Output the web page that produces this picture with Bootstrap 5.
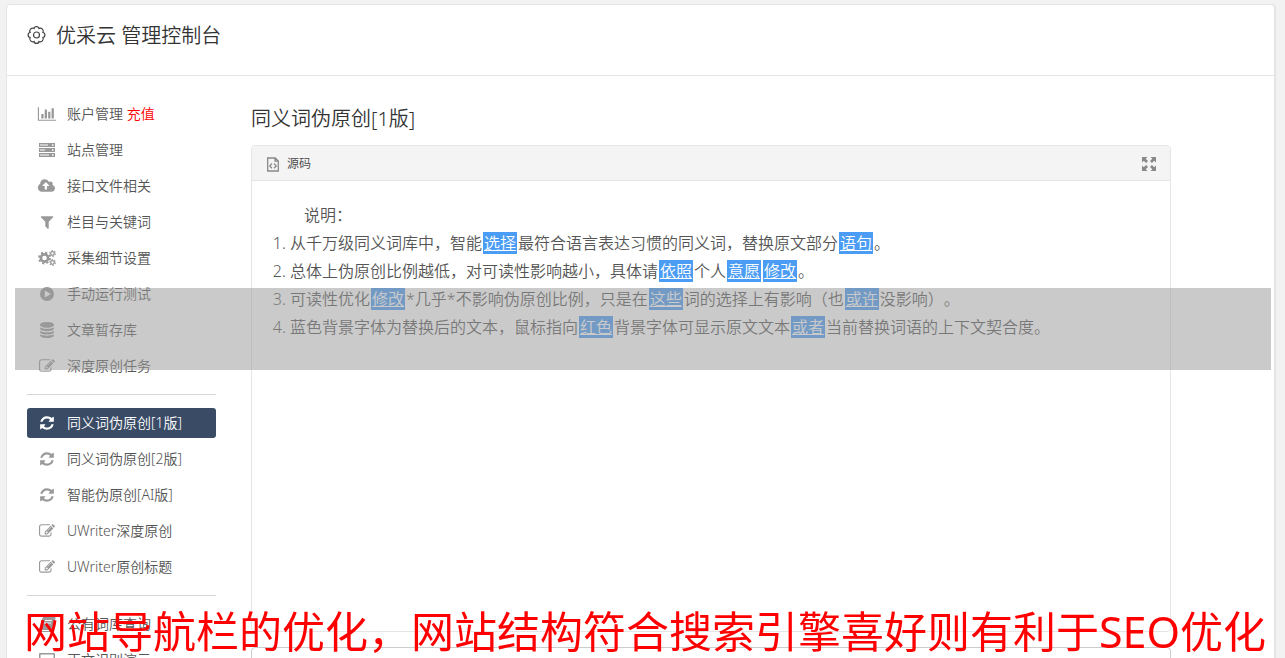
<!DOCTYPE html>
<html lang="zh-CN">
<head>
<meta charset="utf-8">
<meta name="viewport" content="width=device-width, initial-scale=1">
<title>优采云 管理控制台</title>
<link rel="stylesheet" href="https://cdn.jsdelivr.net/npm/bootstrap@5.3.0/dist/css/bootstrap.min.css">
<style>
body{background:#f2f2f2;font-family:"Noto Sans","Noto Sans CJK SC",sans-serif;font-size:14px;font-weight:350;color:#333;height:100vh;overflow:hidden;text-spacing-trim:space-all}
.console{margin:4px 10px 0 6px;background:#fff;border:1px solid #e5e5e5;border-radius:4px;box-shadow:1px 0 0 #e5e5e5;min-height:100vh}
.console-head{height:71px;padding:0 20px;border-bottom:1px solid #e5e5e5}
.console-head h1,.work h2{font-size:20px;line-height:28px;font-weight:350;margin:0}
.console-head h1{padding-top:17px}
.side{width:209px;padding:23px 0 0 20px;flex:none}
.side .nav{gap:6px}
.side .nav-link{height:30px;padding:0 10px;gap:10px;color:#555;border-radius:3px;line-height:30px;white-space:nowrap}
.side .nav-link svg{width:20px;height:16px;flex:none;fill:#999;stroke:none}
.side .nav-link.active{background:#3a4b66;color:#fff}
.side .nav-link.active svg{fill:#fff}
.side hr{margin:13px 0;border-top:1px solid #d6d6d6;opacity:1}
.recharge{color:#f00}
.work{padding:29px 103px 0 35px;min-width:0}
.editor{margin-top:12px;border:1px solid #e5e5e5;border-radius:4px}
.editor-bar{height:35px;padding:2px 13px 0 15px;background:#f4f4f4;border-bottom:1px solid #e5e5e5;border-radius:4px 4px 0 0}
.editor-bar button{border:0;background:none;padding:0;font-size:12px;color:#444;font-weight:350;line-height:20px}
.editor-text{height:450px;padding:20px;font-size:16px;line-height:28px;color:#555}
.editor-text p{margin:0;padding-left:32px}
.editor-text ol{margin:0;padding-left:18px}
.editor-text a{background:#4a9cf4;color:#fff;padding:0 1px;margin:0 1px}
.result-box{display:block;margin-top:15px;height:80px;border:1px solid #ccc;border-radius:4px;width:100%}
.veil{position:fixed;left:15px;right:14px;top:288px;height:82px;background:rgba(154,154,154,.52);pointer-events:none}
.caption{position:fixed;left:24px;bottom:-4px;margin:0;font-size:43px;line-height:60px;font-weight:400;color:#f00;white-space:nowrap;pointer-events:none}
</style>
</head>
<body>
<svg width="0" height="0" class="position-absolute" aria-hidden="true">
  <symbol id="i-refresh" viewBox="0 0 1792 1792"><path d="M1639 1056q0 5-1 7-64 268-268 434.500t-478 166.500q-146 0-282.500-55t-243.500-157l-129 129q-19 19-45 19t-45-19-19-45v-448q0-26 19-45t45-19h448q26 0 45 19t19 45-19 45l-137 137q71 66 161 102t187 36q134 0 250-65t186-179q11-17 53-117 8-23 30-23h192q13 0 22.500 9.500t9.500 22.500zm25-800v448q0 26-19 45t-45 19h-448q-26 0-45-19t-19-45 19-45l138-138q-148-137-349-137-134 0-250 65t-186 179q-11 17-53 117-8 23-30 23h-199q-13 0-22.500-9.500t-9.500-22.500v-7q65-268 270-434.500t480-166.500q146 0 284 55.500t245 156.500l130-129q19-19 45-19t45 19 19 45z"/></symbol>
  <symbol id="i-edit" viewBox="0 0 1792 1792"><path d="M888 1184l116-116-152-152-116 116v56h96v96h56zm440-720q-16-16-33 1l-350 350q-17 17-1 33t33-1l350-350q17-17 1-33zm80 594v190q0 119-84.500 203.500t-203.500 84.500h-832q-119 0-203.500-84.500t-84.500-203.500v-832q0-119 84.500-203.500t203.500-84.500h832q63 0 117 25 15 7 18 23 3 17-9 29l-49 49q-14 14-32 8-23-6-45-6h-832q-66 0-113 47t-47 113v832q0 66 47 113t113 47h832q66 0 113-47t47-113v-126q0-13 9-22l64-64q15-15 35-7t20 29zm-96-738l288 288-672 672h-288v-288zm444 132l-92 92-288-288 92-92q28-28 68-28t68 28l152 152q28 28 28 68t-28 68z"/></symbol>
  <symbol id="i-filter" viewBox="0 0 1792 1792"><path d="M1595 295q17 41-14 70l-493 493v742q0 42-39 59-13 5-25 5-27 0-45-19l-256-256q-19-19-19-45v-486l-493-493q-31-29-14-70 17-39 59-39h1280q42 0 59 39z"/></symbol>
  <symbol id="i-chart" viewBox="0 0 2048 1792"><path d="M640 896v512h-256v-512h256zm384-512v1024h-256v-1024h256zm1024 1152v128h-2048v-1536h128v1408h1920zm-640-896v768h-256v-768h256zm384-384v1152h-256v-1152h256z"/></symbol>
  <symbol id="i-cloud" viewBox="0 0 1920 1792"><path d="M1216 864q0-14-9-23l-352-352q-9-9-23-9t-23 9l-351 351q-10 12-10 24 0 14 9 23t23 9h224v352q0 13 9.500 22.500t22.500 9.500h192q13 0 22.500-9.500t9.500-22.500v-352h224q13 0 22.500-9.500t9.500-22.500zm640 288q0 159-112.500 271.500t-271.500 112.500h-1088q-185 0-316.500-131.500t-131.500-316.500q0-130 70-240t188-165q-2-30-2-43 0-212 150-362t362-150q156 0 285.500 87t188.500 231q71-62 166-62 106 0 181 75t75 181q0 76-41 138 130 31 213.500 135.500t83.500 238.500z"/></symbol>
  <symbol id="i-db" viewBox="0 0 1792 1792"><path d="M896 768q237 0 443-43t325-127v170q0 69-103 128t-280 93.500-385 34.500-385-34.500-280-93.500-103-128v-170q119 84 325 127t443 43zm0 768q237 0 443-43t325-127v170q0 69-103 128t-280 93.500-385 34.500-385-34.500-280-93.500-103-128v-170q119 84 325 127t443 43zm0-384q237 0 443-43t325-127v170q0 69-103 128t-280 93.500-385 34.500-385-34.500-280-93.500-103-128v-170q119 84 325 127t443 43zm0-1152q208 0 385 34.500t280 93.500 103 128v128q0 69-103 128t-280 93.500-385 34.500-385-34.500-280-93.500-103-128v-128q0-69 103-128t280-93.500 385-34.500z"/></symbol>
  <symbol id="i-server" viewBox="0 0 18 16"><path fill-rule="evenodd" d="M1 1h16v4H1zM1 6h16v4H1zM1 11h16v4H1zM2 2.500v1h8v-1zM2 7.500v1h5v-1zM2 12.500v1h9v-1zM14 2.300v1.400h1.500V2.300zM14 7.300v1.400h1.500V7.300zM14 12.300v1.400h1.500v-1.400z"/></symbol>
  <symbol id="i-play" viewBox="0 0 16 16"><path fill-rule="evenodd" d="M8 1a7 7 0 1 1 0 14A7 7 0 0 1 8 1zM5.800 4.500v7l6-3.500z"/></symbol>
  <symbol id="i-cogs" viewBox="0 0 18 16"><g fill="none" stroke="#999"><circle cx="6.500" cy="8" r="3.600" stroke-width="2.600"/><circle cx="6.500" cy="8" r="5.400" stroke-width="2" stroke-dasharray="2.120"/><circle cx="14.500" cy="3.500" r="1.800" stroke-width="1.300"/><circle cx="14.500" cy="3.500" r="2.800" stroke-width="1.200" stroke-dasharray="1.470"/><circle cx="14.500" cy="12.500" r="1.800" stroke-width="1.300"/><circle cx="14.500" cy="12.500" r="2.800" stroke-width="1.200" stroke-dasharray="1.470"/></g></symbol>
  <symbol id="i-book" viewBox="0 0 18 16"><path fill-rule="evenodd" d="M6 1h10.500c1 0 1.300.6 1 1.500l-3.200 10c-.3 1-.8 1.500-1.800 1.500H3.500c-.7 0-.9.900 0 .9H15l2.500-9 .3 1.500-2.500 8.500H3C1.500 15.900.7 14.500 1 13L4.500 2C4.800 1.300 5.200 1 6 1zM7 4l-.3 1h7l.3-1zM6.200 6.500l-.3 1h7l.3-1z"/></symbol>
  <symbol id="i-screen" viewBox="0 0 18 16"><path fill-rule="evenodd" d="M2 1h14q1 0 1 1v10q0 1-1 1h-5v2h1v1H6v-1h1v-2H2q-1 0-1-1V2q0-1 1-1zM2.500 2.500v8h13v-8z"/></symbol>
</svg>

<div class="console">
  <header class="console-head d-flex align-items-start">
    <h1 class="d-flex"><svg class="me-2 mt-1" width="21" height="18" viewBox="0 0 21 18" fill="none" stroke="#444" stroke-width="1.200" aria-hidden="true"><path d="M7 2.600Q7.200.6 9.500.6T12 2.600Q13.900 1.500 15.400 3.100T15.900 6.500Q17.900 6.700 17.900 9T15.900 11.500Q17 13.300 15.400 14.900T12 15.400Q11.800 17.400 9.500 17.400T7 15.400Q5.100 16.500 3.600 14.900T3.100 11.500Q1.100 11.300 1.100 9T3.100 6.500Q2 4.700 3.600 3.100T7 2.600Z"/><circle cx="9.500" cy="9" r="3"/></svg>优采云 管理控制台</h1>
  </header>
  <div class="d-flex">
    <aside class="side">
      <nav class="nav flex-column" aria-label="主菜单">
        <a class="nav-link d-flex align-items-center" href="#"><svg><use href="#i-chart"/></svg><span>账户管理 <span class="recharge">充值</span></span></a>
        <a class="nav-link d-flex align-items-center" href="#"><svg><use href="#i-server"/></svg>站点管理</a>
        <a class="nav-link d-flex align-items-center" href="#"><svg><use href="#i-cloud"/></svg>接口文件相关</a>
        <a class="nav-link d-flex align-items-center" href="#"><svg><use href="#i-filter"/></svg>栏目与关键词</a>
        <a class="nav-link d-flex align-items-center" href="#"><svg><use href="#i-cogs"/></svg>采集细节设置</a>
        <a class="nav-link d-flex align-items-center" href="#"><svg><use href="#i-play"/></svg>手动运行测试</a>
        <a class="nav-link d-flex align-items-center" href="#"><svg><use href="#i-db"/></svg>文章暂存库</a>
        <a class="nav-link d-flex align-items-center" href="#"><svg><use href="#i-edit"/></svg>深度原创任务</a>
      </nav>
      <hr>
      <nav class="nav flex-column" aria-label="原创工具">
        <a class="nav-link active d-flex align-items-center" aria-current="page" href="#"><svg><use href="#i-refresh"/></svg>同义词伪原创[1版]</a>
        <a class="nav-link d-flex align-items-center" href="#"><svg><use href="#i-refresh"/></svg>同义词伪原创[2版]</a>
        <a class="nav-link d-flex align-items-center" href="#"><svg><use href="#i-refresh"/></svg>智能伪原创[AI版]</a>
        <a class="nav-link d-flex align-items-center" href="#"><svg><use href="#i-edit"/></svg>UWriter深度原创</a>
        <a class="nav-link d-flex align-items-center" href="#"><svg><use href="#i-edit"/></svg>UWriter原创标题</a>
      </nav>
      <hr>
      <nav class="nav flex-column" aria-label="查询">
        <a class="nav-link d-flex align-items-center" href="#"><svg><use href="#i-book"/></svg>公有词库查询</a>
        <a class="nav-link d-flex align-items-center" href="#"><svg><use href="#i-screen"/></svg>正文识别演示</a>
      </nav>
    </aside>
    <main class="work flex-grow-1">
      <h2>同义词伪原创[1版]</h2>
      <section class="editor">
        <div class="editor-bar d-flex align-items-center justify-content-between">
          <button type="button" class="d-flex align-items-center gap-2"><svg width="12" height="15" viewBox="0 0 12 15" fill="none" stroke="#888" stroke-width="1.300" aria-hidden="true"><path d="M.7 1h7.500l3.100 3v10H.7zM8 1v3.200h3M4.900 6.500 2.800 8.900l2.100 2.300M7.100 6.500l2.100 2.400-2.100 2.300"/></svg>源码</button>
          <button type="button" aria-label="全屏"><svg class="d-block" width="16" height="16" viewBox="0 0 16 16" fill="#888"><path id="arrow" d="M1 1h5.500L4.700 2.800l2.300 2.300-1.900 1.900-2.300-2.300L1 6.500z"/><use href="#arrow" transform="rotate(90 8 8)"/><use href="#arrow" transform="rotate(180 8 8)"/><use href="#arrow" transform="rotate(270 8 8)"/></svg></button>
        </div>
        <div class="editor-text">
          <p>说明：</p>
          <ol>
            <li>从千万级同义词库中，智能<a href="#">选择</a>最符合语言表达习惯的同义词，替换原文部分<a href="#">语句</a>。</li>
            <li>总体上伪原创比例越低，对可读性影响越小，具体请<a href="#">依照</a>个人<a href="#">意愿</a><a href="#">修改</a>。</li>
            <li>可读性优化<a href="#">修改</a>*几乎*不影响伪原创比例，只是在<a href="#">这些</a>词的选择上有影响（也<a href="#">或许</a>没影响）。</li>
            <li>蓝色背景字体为替换后的文本，鼠标指向<a href="#">红色</a>背景字体可显示原文文本<a href="#">或者</a>当前替换词语的上下文契合度。</li>
          </ol>
        </div>
      </section>
      <textarea class="result-box" aria-label="结果"></textarea>
    </main>
  </div>
</div>
<div class="veil"></div>
<p class="caption">网站导航栏的优化，网站结构符合搜索引擎喜好则有利于SEO优化</p>
<script src="https://cdn.jsdelivr.net/npm/bootstrap@5.3.0/dist/js/bootstrap.bundle.min.js"></script>
</body>
</html>
